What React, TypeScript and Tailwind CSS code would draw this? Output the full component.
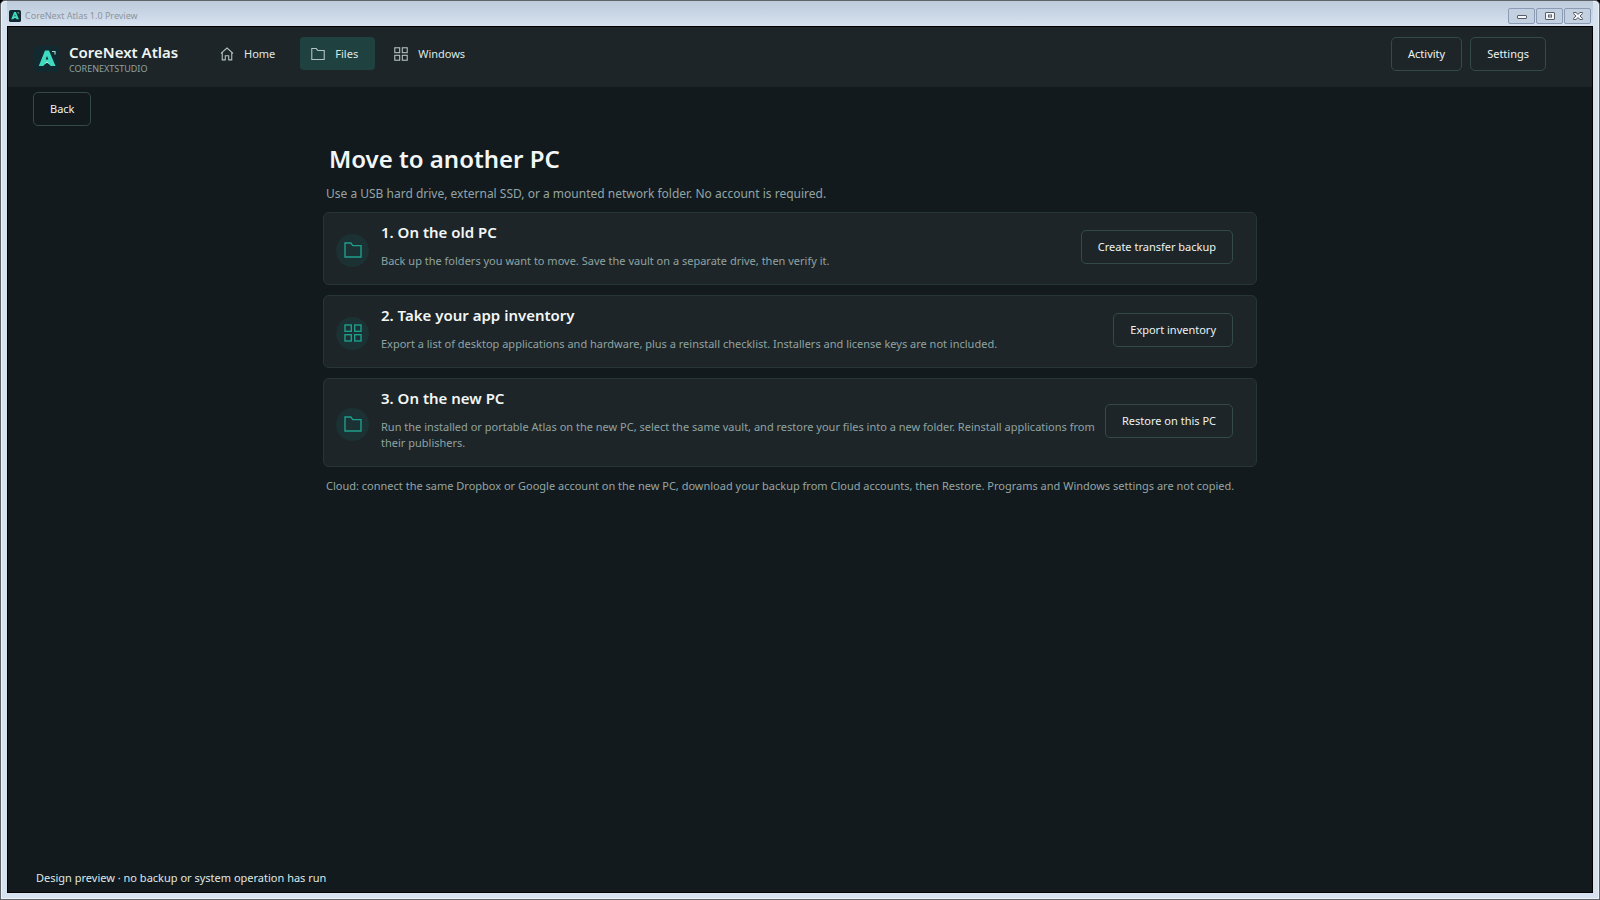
import { ReactNode } from "react";

type IconProps = { className?: string };

const FolderIcon = ({ className }: IconProps) => (
    <svg viewBox="0 0 18 18" fill="none" stroke="currentColor" strokeWidth="1.4" className={className}>
        <path d="M1 2H6.8L8.8 4.6H17V16H1Z" />
    </svg>
);

const GridIcon = ({ className }: IconProps) => (
    <svg viewBox="0 0 18 18" fill="none" stroke="currentColor" strokeWidth="1.4" className={className}>
        <rect x="1" y="1" width="6.3" height="6.3" />
        <rect x="10.7" y="1" width="6.3" height="6.3" />
        <rect x="1" y="10.7" width="6.3" height="6.3" />
        <rect x="10.7" y="10.7" width="6.3" height="6.3" />
    </svg>
);

const HomeIcon = ({ className }: IconProps) => (
    <svg viewBox="0 0 18 18" fill="none" stroke="currentColor" strokeWidth="1.4" className={className}>
        <path d="M1.2 8.2L9 1.4L16.8 8.2M2.9 6.8V16.6H6.8V11.2H11.2V16.6H15.1V6.8" />
    </svg>
);

const Logo = ({ className }: IconProps) => (
    <svg viewBox="0 0 26 26" className={className}>
        <rect width="26" height="26" rx="4" fill="#12292f" />
        <path d="M11 4.5H15L21.5 20H16.8L13 16.2L9.2 20H4.8Z" fill="#3ddcc0" />
        <path d="M13 10L14.4 13.5H11.6Z" fill="#12292f" />
        <path d="M10.6 18L13 15.4L15.4 18L13 16.8Z" fill="#d8f5ee" />
        <path d="M18 5.5H21V8.5" fill="none" stroke="#9fd6cf" strokeWidth="1.2" />
    </svg>
);

const navItems = [
    { label: "Home", Icon: HomeIcon, active: false },
    { label: "Files", Icon: FolderIcon, active: true },
    { label: "Windows", Icon: GridIcon, active: false },
];

const steps = [
    {
        title: "1. On the old PC",
        text: "Back up the folders you want to move. Save the vault on a separate drive, then verify it.",
        action: "Create transfer backup",
        Icon: FolderIcon,
    },
    {
        title: "2. Take your app inventory",
        text: "Export a list of desktop applications and hardware, plus a reinstall checklist. Installers and license keys are not included.",
        action: "Export inventory",
        Icon: GridIcon,
    },
    {
        title: "3. On the new PC",
        text: "Run the installed or portable Atlas on the new PC, select the same vault, and restore your files into a new folder. Reinstall applications from their publishers.",
        action: "Restore on this PC",
        Icon: FolderIcon,
    },
];

const OutlineButton = ({ children }: { children: ReactNode }) => (
    <button className="h-[34px] shrink-0 whitespace-nowrap rounded-[5px] border border-[#344a4a] px-4 pt-px text-[11px] text-[#edf3f2] hover:bg-[#24403f]">
        {children}
    </button>
);

const CaptionButton = ({ label, children }: { label: string; children: ReactNode }) => (
    <button aria-label={label} className="flex h-4 w-[27px] items-center justify-center rounded-[2px] border border-[#8c9bb5] bg-[#c3d0e0]">
        <svg viewBox="0 0 12 10" className="h-[10px] w-3" fill="#f4f6f9" stroke="#565d6b">
            {children}
        </svg>
    </button>
);

const TitleBar = () => (
    <div className="flex h-[25px] shrink-0 items-start justify-between bg-linear-to-b from-[#bccada] to-[#d6e2f0] pl-[2px] pr-[2px]">
        <div className="flex items-center gap-1 pt-[7px]">
            <Logo className="size-3" />
            <span className="text-[9px] leading-4 text-[#8e949c]">CoreNext Atlas 1.0 Preview</span>
        </div>
        <div className="flex gap-px pt-[7px]">
            <CaptionButton label="Minimize">
                <rect x="1.5" y="4.5" width="9" height="3" rx="0.5" />
            </CaptionButton>
            <CaptionButton label="Maximize">
                <rect x="1.5" y="1.5" width="9" height="7" rx="0.5" />
                <rect x="4.5" y="4" width="3" height="2" />
            </CaptionButton>
            <CaptionButton label="Close">
                <path d="M1.5 1.5H4L6 3.4L8 1.5H10.5V2.5L8 5L10.5 7.5V8.5H8L6 6.6L4 8.5H1.5V7.5L4 5L1.5 2.5Z" />
            </CaptionButton>
        </div>
    </div>
);

const App = () => {
    return (
        <div className="h-dvh bg-black font-['Noto_Sans','Segoe_UI',sans-serif]">
            <div className="flex h-full flex-col rounded-t-[5px] border border-[#5f6468] bg-[#d6e2f0] px-[6px] pb-[6px] shadow-[inset_0_0_0_1px_#eef3f9]">
                <TitleBar />
                <div className="flex min-h-0 grow flex-col border border-black bg-[#131a1d]">
                    <header className="flex h-[60px] shrink-0 items-start bg-[#1d2528] pl-[26px] pr-[46px]">
                        <div className="flex items-start gap-[9px] pt-[15px]">
                            <Logo className="mt-1 size-[26px]" />
                            <div className="flex w-[140px] flex-col whitespace-nowrap">
                                <span className="text-[15px] font-semibold leading-5 text-[#edf5f4]">CoreNext Atlas</span>
                                <span className="text-[9px] leading-[14px] text-[#8fa3a3]">CORENEXTSTUDIO</span>
                            </div>
                        </div>
                        <nav className="flex grow gap-2 pt-[10px]">
                            {navItems.map(({ label, Icon, active }) => (
                                <button
                                    key={label}
                                    className={`flex h-[33px] items-center gap-[10px] rounded-[4px] pl-[11px] pr-[17px] text-[11px] text-[#dfe8e7] ${active ? "bg-[#1f413f]" : "hover:bg-[#24302f]"}`}
                                >
                                    <Icon className="size-[14px] text-[#b4c2c2]" />
                                    <span className="pt-px">{label}</span>
                                </button>
                            ))}
                        </nav>
                        <div className="flex gap-2 pt-[10px]">
                            <OutlineButton>Activity</OutlineButton>
                            <OutlineButton>Settings</OutlineButton>
                        </div>
                    </header>
                    <div className="px-[25px] pt-[5px]">
                        <OutlineButton>Back</OutlineButton>
                    </div>
                    <main className="flex grow flex-col items-center pl-6 pr-11">
                        <div className="w-full max-w-[934px]">
                            <h1 className="mt-[15px] pl-[6px] text-[24px] font-semibold leading-9 text-[#f2f7f6]">Move to another PC</h1>
                            <p className="mt-[7px] pl-[3px] text-[12px] leading-5 text-[#93a5a5]">
                                Use a USB hard drive, external SSD, or a mounted network folder. No account is required.
                            </p>
                            <ul className="mt-2 flex flex-col gap-[10px]">
                                {steps.map(({ title, text, action, Icon }) => (
                                    <li key={title} className="flex items-center rounded-[6px] border border-[#263536] bg-[#1d2528] pt-[7px] pb-2 pl-3 pr-[23px]">
                                        <div className="mt-1 mr-3 flex size-[33px] shrink-0 items-center justify-center rounded-full bg-[#1c3133]">
                                            <Icon className="size-[18px] text-[#1f9d8c]" />
                                        </div>
                                        <div className="mr-1 grow">
                                            <h2 className="text-[15px] font-semibold leading-6 text-[#f2f7f6]">{title}</h2>
                                            <p className="mt-[9px] mb-[7px] text-[11px] leading-4 text-[#8fa3a3]">{text}</p>
                                        </div>
                                        <div className="flex pb-[2px]">
                                            <OutlineButton>{action}</OutlineButton>
                                        </div>
                                    </li>
                                ))}
                            </ul>
                            <p className="mt-[11px] pl-[3px] text-[11px] leading-4 text-[#93a5a5]">
                                Cloud: connect the same Dropbox or Google account on the new PC, download your backup from Cloud accounts, then Restore. Programs and Windows settings are not copied.
                            </p>
                        </div>
                    </main>
                    <footer className="px-[28px] pb-[6px] text-[11px] leading-4 text-[#dfe8e7]">
                        Design preview · no backup or system operation has run
                    </footer>
                </div>
            </div>
        </div>
    );
};

export default App;
